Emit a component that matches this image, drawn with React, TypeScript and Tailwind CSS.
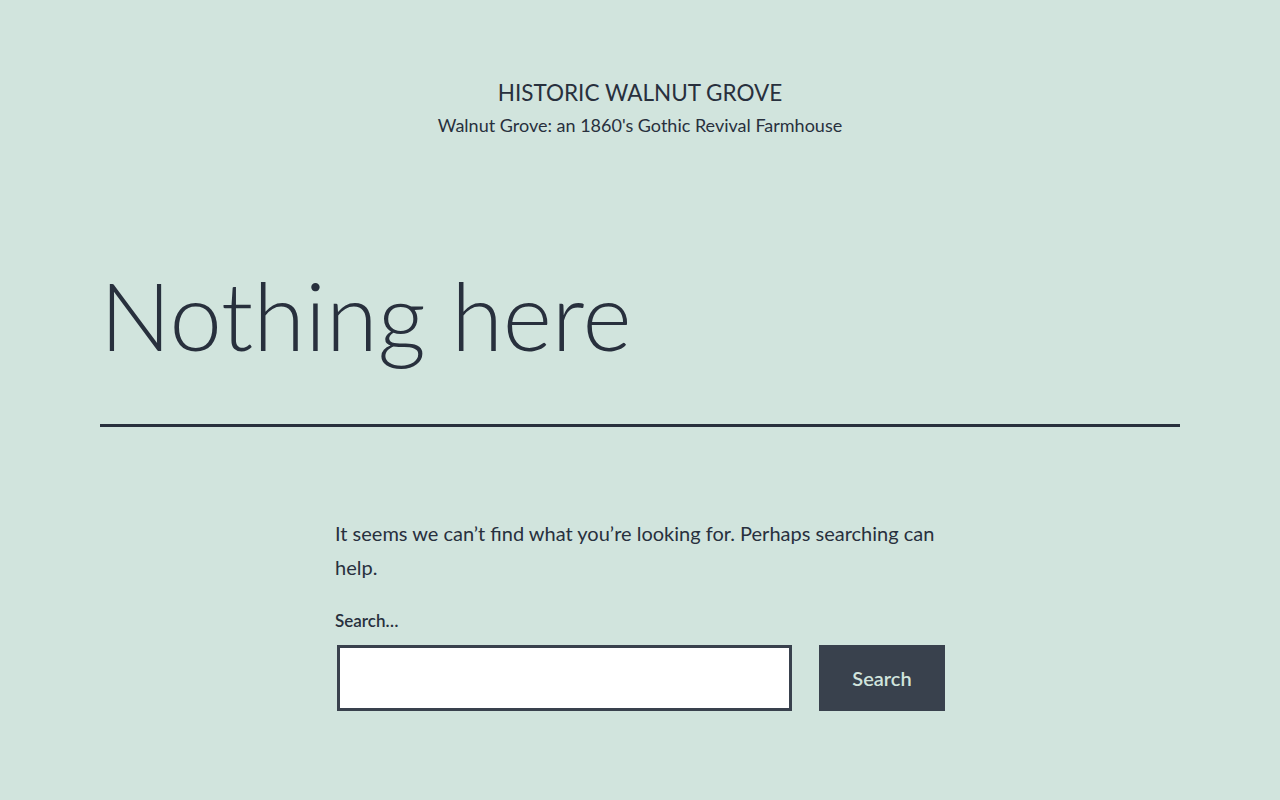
export default function App() {
  return (
    <div
      className="min-h-screen bg-[#d1e4dd] text-[#28303d]"
      style={{ fontFamily: 'Lato, "Open Sans", sans-serif' }}
    >
      <header className="pt-[77px] text-center">
        <p className="text-[22.5px] leading-[31px] uppercase">Historic Walnut Grove</p>
        <p className="mt-[5px] text-[18px] leading-[25px]">
          Walnut Grove: an 1860&apos;s Gothic Revival Farmhouse
        </p>
      </header>

      <main className="px-[100px]">
        <div className="mt-[125px] border-b-[3px] border-[#28303d] pb-[58px]">
          <h1 className="text-[94px] font-light leading-[1.1]">Nothing here</h1>
        </div>

        <div className="mx-auto mt-[89px] max-w-[610px]">
          <p className="text-[20px] leading-[34px]">
            It seems we can’t find what you’re looking for. Perhaps searching can help.
          </p>

          <form className="mt-[22px]" onSubmit={(e) => e.preventDefault()}>
            <label htmlFor="s" className="block text-[17px] font-semibold leading-[29px]">
              Search…
            </label>
            <div className="mt-[10px] flex items-start gap-[27px]">
              <input
                id="s"
                type="search"
                className="ml-[2px] h-[66px] w-[455px] border-[3px] border-[#39414d] bg-white px-4 text-[20px] outline-none"
              />
              <button
                type="submit"
                className="h-[66px] w-[126px] bg-[#39414d] text-[20px] font-semibold text-[#d1e4dd]"
              >
                Search
              </button>
            </div>
          </form>
        </div>
      </main>
    </div>
  );
}
